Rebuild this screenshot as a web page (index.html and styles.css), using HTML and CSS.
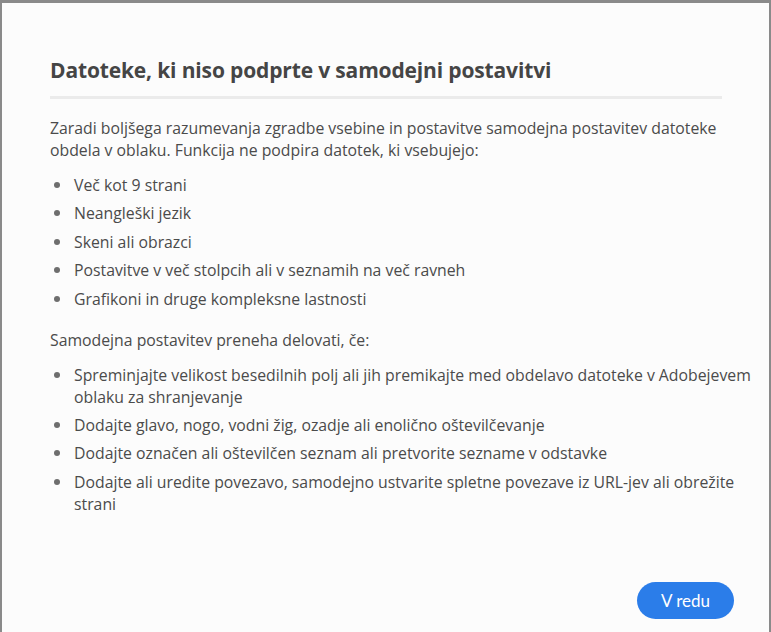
FILE: index.html
```html
<!DOCTYPE html>
<html lang="sl">
<head>
<meta charset="utf-8">
<title>Datoteke, ki niso podprte v samodejni postavitvi</title>
<link rel="stylesheet" href="styles.css">
</head>
<body>
<div class="dialog">
  <div class="content">
    <h1 class="title">Datoteke, ki niso podprte v samodejni postavitvi</h1>
    <div class="divider"></div>
    <p class="para">Zaradi boljšega razumevanja zgradbe vsebine in postavitve samodejna postavitev datoteke obdela v oblaku. Funkcija ne podpira datotek, ki vsebujejo:</p>
    <ul class="list">
      <li>Več kot 9 strani</li>
      <li>Neangleški jezik</li>
      <li>Skeni ali obrazci</li>
      <li>Postavitve v več stolpcih ali v seznamih na več ravneh</li>
      <li>Grafikoni in druge kompleksne lastnosti</li>
    </ul>
    <p class="para">Samodejna postavitev preneha delovati, če:</p>
    <ul class="list">
      <li>Spreminjajte velikost besedilnih polj ali jih premikajte med obdelavo datoteke v Adobejevem oblaku za shranjevanje</li>
      <li>Dodajte glavo, nogo, vodni žig, ozadje ali enolično oštevilčevanje</li>
      <li>Dodajte označen ali oštevilčen seznam ali pretvorite sezname v odstavke</li>
      <li>Dodajte ali uredite povezavo, samodejno ustvarite spletne povezave iz URL-jev ali obrežite strani</li>
    </ul>
  </div>
  <div class="footer">
    <button class="btn">V redu</button>
  </div>
</div>
</body>
</html>
```
FILE: styles.css
```css
html, body {
  margin: 0;
  padding: 0;
  height: 100%;
}
body {
  background: #fcfcfc;
  font-family: "Open Sans", "Noto Sans", sans-serif;
  color: #4b4b4b;
}
.dialog {
  box-sizing: border-box;
  height: 632px;
  width: 771px;
  border-top: 3px solid #8a8a8a;
  border-left: 2px solid #8a8a8a;
  border-right: 2px solid #8a8a8a;
  background: #fcfcfc;
  display: flex;
  flex-direction: column;
  padding: 0 4px 0 48px;
}
.content {
  flex: 1;
  padding-top: 53px;
}
.title {
  margin: 0;
  font-family: "Open Sans", sans-serif;
  font-weight: bold;
  font-size: 21px;
  letter-spacing: -0.15px;
  line-height: 28px;
  color: #454545;
}
.divider {
  width: 672px;
  height: 3px;
  background: #ebebeb;
  margin-top: 12px;
  margin-bottom: 18px;
}
.para {
  margin: 0;
  font-size: 15.8px;
  line-height: 22px;
}
.list {
  list-style: none;
  margin: 13px 0 19px;
  padding: 0;
}
.list li {
  position: relative;
  padding-left: 24px;
  font-size: 15.8px;
  line-height: 22px;
  margin-bottom: 6.4px;
}
.list li::before {
  content: "";
  position: absolute;
  left: 4px;
  top: 8px;
  width: 6px;
  height: 6px;
  border-radius: 50%;
  background: #6e6e6e;
}
.footer {
  display: flex;
  justify-content: flex-end;
  padding-bottom: 13px;
}
.btn {
  background: #2b7de9;
  color: #fff;
  border: none;
  border-radius: 19px;
  height: 37px;
  width: 97px;
  font-family: "Lato", sans-serif;
  font-size: 17px;
  margin-right: 31px;
  padding: 0;
}
```
